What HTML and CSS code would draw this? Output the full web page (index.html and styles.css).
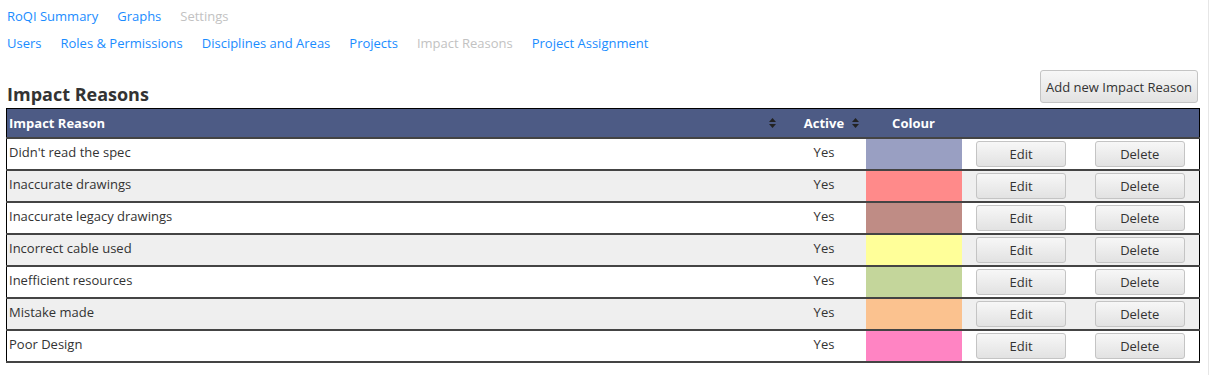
FILE: index.html
```html
<!DOCTYPE html>
<html>
<head>
<meta charset="utf-8">
<link rel="stylesheet" href="styles.css">
</head>
<body>
<div class="page">
  <nav class="nav">
    <a class="link" href="#">RoQI Summary</a>
    <a class="link" href="#">Graphs</a>
    <span class="link current">Settings</span>
  </nav>
  <nav class="nav">
    <a class="link" href="#">Users</a>
    <a class="link" href="#">Roles &amp; Permissions</a>
    <a class="link" href="#">Disciplines and Areas</a>
    <a class="link" href="#">Projects</a>
    <span class="link current">Impact Reasons</span>
    <a class="link" href="#">Project Assignment</a>
  </nav>
  <div class="titlebar">
    <h1 class="title">Impact Reasons</h1>
    <button class="btn btn-add">Add new Impact Reason</button>
  </div>
  <table class="grid">
    <colgroup>
      <col>
      <col class="c-active">
      <col class="c-colour">
      <col class="c-btn">
      <col class="c-btn">
    </colgroup>
    <thead>
      <tr>
        <th class="th-name">Impact Reason<span class="sort"><svg width="7" height="10" viewBox="0 0 7 10"><path d="M3.5 0 L7 4 L0 4 Z M0 6 L7 6 L3.5 10 Z" fill="#222"/></svg></span></th>
        <th class="th-center">Active<span class="sort"><svg width="7" height="10" viewBox="0 0 7 10"><path d="M3.5 0 L7 4 L0 4 Z M0 6 L7 6 L3.5 10 Z" fill="#222"/></svg></span></th>
        <th class="th-center">Colour</th>
        <th></th>
        <th></th>
      </tr>
    </thead>
    <tbody>
      <tr><td class="name">Didn't read the spec</td><td class="yes">Yes</td><td class="swatch" style="background:#999fc2"></td><td class="act"><button class="btn">Edit</button></td><td class="act"><button class="btn">Delete</button></td></tr>
      <tr class="alt"><td class="name">Inaccurate drawings</td><td class="yes">Yes</td><td class="swatch" style="background:#ff8a8a"></td><td class="act"><button class="btn">Edit</button></td><td class="act"><button class="btn">Delete</button></td></tr>
      <tr><td class="name">Inaccurate legacy drawings</td><td class="yes">Yes</td><td class="swatch" style="background:#bf8c85"></td><td class="act"><button class="btn">Edit</button></td><td class="act"><button class="btn">Delete</button></td></tr>
      <tr class="alt"><td class="name">Incorrect cable used</td><td class="yes">Yes</td><td class="swatch" style="background:#ffff99"></td><td class="act"><button class="btn">Edit</button></td><td class="act"><button class="btn">Delete</button></td></tr>
      <tr><td class="name">Inefficient resources</td><td class="yes">Yes</td><td class="swatch" style="background:#c4d69b"></td><td class="act"><button class="btn">Edit</button></td><td class="act"><button class="btn">Delete</button></td></tr>
      <tr class="alt"><td class="name">Mistake made</td><td class="yes">Yes</td><td class="swatch" style="background:#fbc28f"></td><td class="act"><button class="btn">Edit</button></td><td class="act"><button class="btn">Delete</button></td></tr>
      <tr><td class="name">Poor Design</td><td class="yes">Yes</td><td class="swatch" style="background:#ff84c3"></td><td class="act"><button class="btn">Edit</button></td><td class="act"><button class="btn">Delete</button></td></tr>
    </tbody>
  </table>
</div>
</body>
</html>
```

FILE: styles.css
```css
html, body {
  margin: 0;
  padding: 0;
  background: #fff;
}
body {
  font-family: "Open Sans", "Liberation Sans", sans-serif;
  font-size: 13px;
  color: #333;
  border-right: 1px solid #e6e6e6;
  min-height: 375px;
  box-sizing: border-box;
  width: 1209px;
}
.page {
  padding: 3px 11px 0 6px;
}
.nav {
  display: flex;
  gap: 19px;
  height: 27px;
  line-height: 27px;
  padding-left: 1px;
}
.link {
  color: #1a8cff;
  text-decoration: none;
}
.link.current {
  color: #c2c2c2;
}
.titlebar {
  display: flex;
  justify-content: space-between;
  align-items: flex-end;
  margin-top: 13px;
  padding-bottom: 5px;
}
.title {
  margin: 0;
  font-size: 18px;
  font-weight: bold;
  line-height: 22px;
  padding-left: 1px;
  margin-bottom: -2px;
  color: #333;
}
.btn {
  display: block;
  margin: 0 auto;
  font-family: "Open Sans", "Liberation Sans", sans-serif;
  font-size: 13px;
  line-height: 16px;
  color: #333;
  background: linear-gradient(#f7f7f7, #e2e2e2);
  border: 1px solid #c4c4c4;
  border-radius: 3px;
  padding: 0;
  width: 90px;
  height: 26px;
  cursor: pointer;
}
.btn-add {
  width: 158px;
  height: 33px;
  margin: 0 -1px 0 0;
}
.grid {
  width: 1194px;
  border-collapse: collapse;
  table-layout: fixed;
  border: 1px solid #000;
}
.c-active { width: 83px; }
.c-colour { width: 96px; }
.c-btn { width: 119px; }
.grid th {
  background: #4d5b85;
  color: #fff;
  font-weight: bold;
  height: 28px;
  padding: 0 2px;
  border-bottom: 2px solid #444;
  position: relative;
  text-align: left;
  line-height: 18px;
}
.grid th.th-center {
  text-align: center;
}
.sort {
  position: absolute;
  right: 7px;
  top: 9px;
  line-height: 0;
}
.grid td {
  height: 32px;
  padding: 0;
  border-bottom: 2px solid #444;
  vertical-align: middle;
  line-height: 18px;
  box-sizing: border-box;
}
.grid tr.alt td {
  background: #efefef;
}
.grid td.name {
  padding: 0 0 5px 2px;
}
.grid td.yes {
  text-align: center;
  padding-bottom: 5px;
}
.grid td.act {
  padding: 0;
}
```
